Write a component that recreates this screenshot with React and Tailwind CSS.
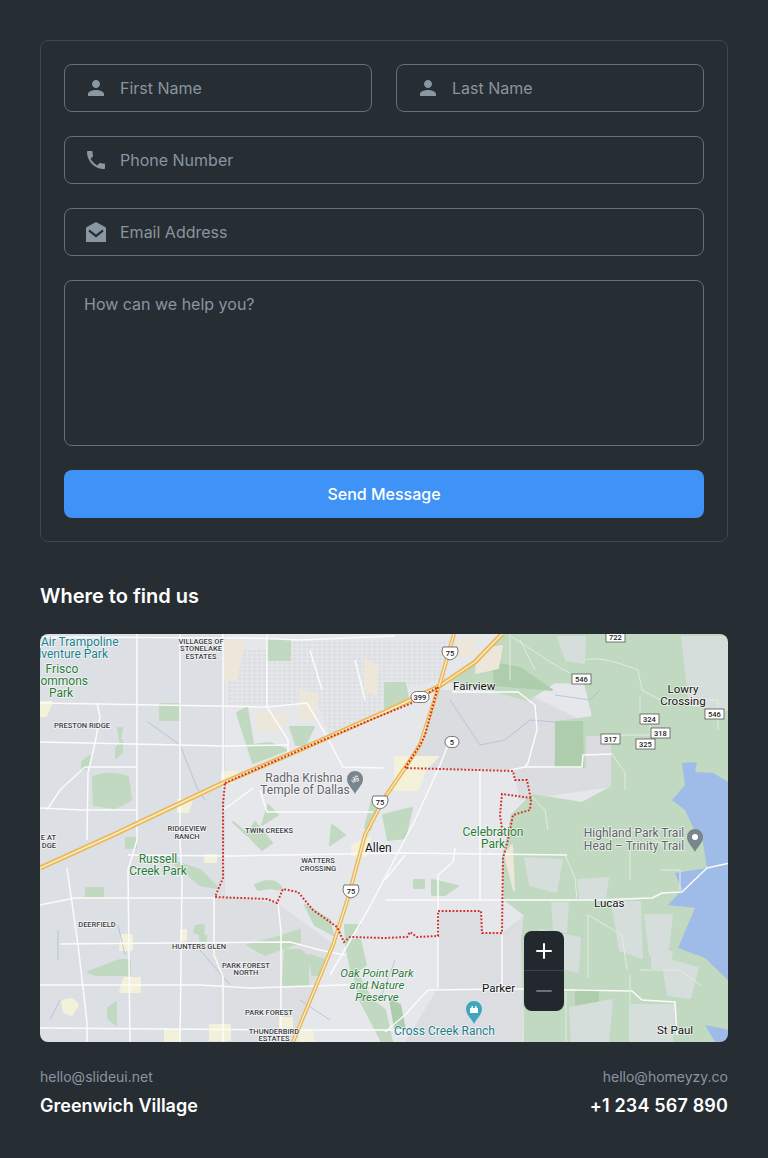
import { Plus, Minus } from 'lucide-react';

// --- map data, in page coordinates (viewBox starts at 40,634) ---
const greens = [
  'M502 634 L728 634 L728 1042 L525 1042 L522 940 L525 915 L505 900 L503 858 L512 815 L532 795 L582 803 L612 787 L612 735 L585 735 L585 767 L555 767 L558 722 L593 717 L585 683 L555 682 L528 700 L498 692 L452 682 L478 663 Z',
  'M237 713 L247 707 L253 745 L270 743 L287 750 L253 763 Z', 'M385 683 L405 683 L408 698 L385 708 Z',
  'M160 704 H180 V720 H160 Z', 'M268 640 H290 V660 H268 Z', 'M290 727 H314 L305 745 H296 Z', 'M116 748 L122 740 L122 752 L116 758 Z',
  'M93 777 Q110 770 128 777 L131 800 L115 808 L94 805 Z', 'M82 762 L90 756 L88 767 L82 770 Z', 'M118 728 L122 728 L120 740 Z',
  'M86 888 H103 V897 H86 Z', 'M200 936 H206 V942 H200 Z', 'M285 950 H300 L318 965 H308 V985 H283 Z',
  'M310 955 L325 960 L322 975 L312 975 Z', 'M345 940 H360 L366 965 L352 975 Z', 'M352 965 L372 1000 L385 1010 L392 1042 L382 1042 L360 1000 Z',
  'M88 972 L120 960 H130 V975 L95 975 Z', 'M108 1008 L116 1002 V1025 L108 1018 Z', 'M170 860 L200 885 L218 888 L200 870 Z',
  'M255 885 Q275 875 283 890 L270 888 L258 890 Z', 'M372 800 L378 806 L370 830 L365 828 Z', 'M196 926 L204 925 L203 936 L194 932 Z',
  'M383 815 L412 808 L405 838 L388 840 Z', 'M233 822 L243 830 L262 850 L272 843 L255 822 L247 835 Z', 'M268 805 L278 815 L262 825 Z',
  'M332 825 L345 835 L330 845 Z', 'M305 905 L330 920 L333 935 L315 925 Z', 'M247 945 L275 938 L300 930 L300 942 L265 955 Z',
  'M432 880 L458 886 L445 895 L432 895 Z', 'M414 880 H424 V888 H414 Z', 'M126 838 H136 V848 H126 Z', 'M346 940 L360 925 L345 925 Z',
];
const darkGreens = [
  'M556 722 H582 L583 767 H556 Z', 'M493 663 L520 668 L552 690 L495 685 Z',
  'M390 1000 L400 1005 L405 1030 L395 1028 Z', 'M576 990 H598 V1007 H576 Z',
];
const suburbs = [
  'M525 858 L562 860 L556 892 L530 885 Z', 'M578 880 L608 878 L605 898 L580 898 Z', 'M552 903 L568 903 L566 932 L554 930 Z',
  'M612 902 L640 902 L642 958 L620 950 Z', 'M645 915 L672 915 L668 950 L650 955 Z', 'M652 952 L672 952 L668 968 L652 968 Z',
  'M662 958 L698 968 L690 998 L668 995 Z', 'M540 930 L580 938 L578 972 L552 965 Z', 'M570 1008 L612 1000 L608 1042 L572 1042 Z',
  'M632 1005 L675 1005 L672 1042 L632 1042 Z', 'M682 637 L730 637 L730 710 L690 705 Z', 'M558 637 L585 637 L584 663 L566 660 Z',
];
const beige = [
  'M225 642 L245 640 L236 680 H225 Z', 'M300 690 L318 695 L314 720 H300 Z', 'M258 712 L288 715 L282 730 H258 Z',
  'M478 650 L502 646 L498 668 L476 673 Z', 'M505 855 L512 845 L514 890 Z', 'M365 660 L378 665 L376 695 L365 690 Z', 'M455 640 L475 638 L472 656 L458 655 Z',
];
const yellows = [
  'M395 757 H438 L425 770 L418 790 H395 Z', 'M178 800 H192 L188 812 H178 Z', 'M222 772 H238 L232 783 H222 Z', 'M352 845 L370 838 L366 856 L352 855 Z',
  'M122 935 H132 V950 H120 Z', 'M62 1002 Q72 995 78 1005 L72 1015 L64 1012 Z', 'M124 978 H140 V992 H120 Z',
  'M210 1025 H230 V1040 H210 Z', 'M165 1030 H180 V1042 H165 Z', 'M181 930 H186 V940 H181 Z', 'M40 702 H52 L46 716 H40 Z', 'M205 855 H216 V862 H205 Z',
  'M300 1032 L312 1030 L314 1042 H300 Z', 'M280 1018 H292 V1028 H280 Z',
];
const roads = [
  'M40 637 L250 638 L300 640 L395 636', 'M40 703 L267 707 L307 703 L327 737 L343 767 L385 768', 'M40 742 L225 746 L288 745',
  'M137 634 V840 L128 870 L130 1042', 'M180 634 V840 L182 880 L180 1042', 'M223 634 V790 M214 897 V955 L223 977 V1042',
  'M97 703 L100 717 L95 743 L88 773 L87 840 M67 868 L78 945 L87 1022 V1042', 'M85 767 H137', 'M40 808 L82 810 H137', 'M85 767 L60 790 L47 810',
  'M128 855 L230 856 L285 855 L400 853 L567 855', 'M40 905 L75 898 L215 898', 'M60 944 L290 942 L320 950 L345 955',
  'M40 985 L200 985 L250 988 L340 985 L370 985 L405 988', 'M40 1028 L300 1030 L405 1030', 'M278 903 L281 932 V1042',
  'M267 635 V707 L288 740 V757', 'M253 788 L237 800 L223 810 M260 790 L267 812 L373 812', 'M310 650 L322 690', 'M355 660 L365 700',
  'M452 692 L518 692 L535 705 L537 730 L528 763 L525 767 L582 767 L583 755 L612 754', 'M525 767 L510 770',
  'M450 740 L440 765 L415 820 L368 910 L330 975', 'M455 848 L453 862 L438 875 V988', 'M405 855 L385 880', 'M480 771 V900',
  'M385 900 L598 900 L652 898 L662 893 L682 892 L707 868 L730 863',
  'M428 990 L515 989 L632 991 L642 1000 L675 1002 L677 1035', 'M502 935 V988', 'M405 1015 L428 990', 'M385 1032 L405 1015',
];
const minorRoads = [
  'M585 660 Q600 655 638 670 L642 690 L658 699 L718 700 V730', 'M612 754 L625 773 V790', 'M532 797 L545 810 L548 830', 'M565 855 L575 878 L577 900',
  'M588 915 V978', 'M612 735 H650 V725', 'M640 697 L640 725', 'M600 830 H640 L670 850', 'M630 835 V880 M660 870 H680 V890',
  'M640 970 H680 L700 985', 'M520 640 L535 670', 'M510 634 V680', 'M512 637 L552 663 L570 673',
  'M630 975 V1042', 'M627 970 L622 935 L588 915', 'M523 1008 V1042', 'M566 992 V1042',
];
const streams = [
  'M118 925 L125 955', 'M58 930 V960', 'M148 722 L180 745 L198 790 L205 800', 'M200 950 L230 985', 'M300 1000 L330 1020',
  'M555 722 L530 720 L505 740 L480 745 L450 700', 'M600 690 L590 700 L555 695', 'M380 1000 L395 960', 'M60 1000 L50 1020',
];
const dots = 'M225 783 L300 750 L370 720 L412 703 L438 687 L425 735 L420 745 L405 768 L513 771 L515 780 L527 780 L531 800 L530 810 L513 815 L508 840 L503 858 L502 933 L482 933 L481 911 L438 911 L438 936 L417 937 L410 932 L407 937 L385 938 L350 937 L344 942 L337 927 L313 910 L298 892 L283 889 L277 903 L267 899 L215 897 L223 878 L223 803 Z M531 798 L502 794 L500 815 L503 835';
const teal = '#1a7f8e';
const parkGreen = '#2a7b37';
const labels = [
  ['Air Trampoline', 41, 646, 12, teal, 'start'], ['Adventure Park', 108, 658, 12, teal, 'end'],
  ['Frisco', 62, 673, 12, parkGreen], ['Commons', 88, 685, 12, parkGreen, 'end'], ['Park', 61, 697, 12, parkGreen],
  ['VILLAGES OF', 201, 644, 7.5, '#3c4043'], ['STONELAKE', 201, 651, 7.5, '#3c4043'], ['ESTATES', 201, 659, 7.5, '#3c4043'],
  ['PRESTON RIDGE', 82, 728, 7.5, '#3c4043'], ['Radha Krishna', 304, 782, 12, '#5f6368'], ['Temple of Dallas', 305, 794, 12, '#5f6368'],
  ['RIDGEVIEW', 187, 831, 7.5, '#3c4043'], ['RANCH', 187, 839, 7.5, '#3c4043'], ['TWIN CREEKS', 269, 833, 7.5, '#3c4043'],
  ['Fairview', 453, 690, 11.5, '#111', 'start'], ['Lowry', 683, 693, 11.5, '#111'], ['Crossing', 683, 705, 11.5, '#111'],
  ['Celebration', 493, 836, 12, parkGreen], ['Park', 493, 848, 12, parkGreen],
  ['Highland Park Trail', 634, 837, 12, '#5f6368'], ['Head – Trinity Trail', 634, 850, 12, '#5f6368'],
  ['Allen', 365, 852, 12, '#111', 'start'], ['WATTERS', 318, 863, 7.5, '#3c4043'], ['CROSSING', 318, 871, 7.5, '#3c4043'],
  ['Russell', 158, 863, 12, parkGreen], ['Creek Park', 158, 875, 12, parkGreen],
  ['E AT', 56, 840, 7.5, '#3c4043', 'end'], ['DGE', 56, 848, 7.5, '#3c4043', 'end'],
  ['DEERFIELD', 97, 927, 7.5, '#3c4043'], ['HUNTERS GLEN', 199, 949, 7.5, '#3c4043'],
  ['PARK FOREST', 246, 968, 7.5, '#3c4043'], ['NORTH', 246, 975, 7.5, '#3c4043'], ['PARK FOREST', 269, 1015, 7.5, '#3c4043'],
  ['THUNDERBIRD', 274, 1034, 7.5, '#3c4043'], ['ESTATES', 274, 1041, 7.5, '#3c4043'],
  ['Lucas', 594, 907, 11.5, '#111', 'start'], ['Parker', 482, 992, 11.5, '#111', 'start'], ['St Paul', 657, 1034, 11.5, '#111', 'start'],
  ['Cross Creek Ranch', 394, 1035, 12, teal, 'start'],
];
const italicLabels = [['Oak Point Park', 377, 977], ['and Nature', 377, 989], ['Preserve', 377, 1001]];
const stateShields = [['722', 615, 637], ['546', 581, 679], ['546', 714, 714], ['324', 649, 719], ['318', 660, 733], ['325', 645, 744], ['317', 610, 739]];
const ovalShields = [['399', 420, 697], ['5', 452, 742]];
const usShields = [[450, 653], [380, 802], [351, 891]];

function Pin({ x, y, color, children }) {
  return (
    <g transform={`translate(${x} ${y})`}>
      <path d="M0 14 C-2 9 -8 5 -8 -1 A8 8 0 1 1 8 -1 C8 5 2 9 0 14 Z" fill={color} />
      {children}
    </g>
  );
}

function Blobs({ paths, fill }) {
  return (
    <g fill={fill} stroke={fill} strokeWidth="2" strokeLinejoin="round">
      {paths.map(d => <path key={d} d={d} />)}
    </g>
  );
}

function MapDrawing() {
  return (
    <svg viewBox="40 634 688 408" className="block w-full h-full" fontFamily="Roboto, sans-serif">
      <defs>
        <pattern id="streets" width="5" height="4" patternUnits="userSpaceOnUse">
          <rect width="5" height="4" fill="#dcdee2" />
          <path d="M0 1H5M2 0V4" stroke="#eceef0" strokeWidth="0.7" />
        </pattern>
        <filter id="soft" x="0" y="0" width="100%" height="100%">
          <feGaussianBlur stdDeviation="0.45" />
        </filter>
      </defs>
      <g filter="url(#soft)">
        <rect x="40" y="634" width="688" height="408" fill="#e5e7eb" />
        <rect x="40" y="634" width="185" height="408" fill="#dcdfe3" />
        <path d="M225 897 L215 897 V1042 L295 1042 L335 945 L277 903 Z" fill="#dcdee2" />
        <path d="M438 911 H481 V933 H502 L525 915 V1042 H405 L438 988 Z" fill="#dbdde1" />
        <path d="M440 690 H520 L612 735 V787 L520 800 L513 770 L405 768 L430 720 Z" fill="#dadce0" />
        <path d="M290 640 H395 L385 712 L330 737 L318 705 L285 705 L267 707 V640 Z" fill="url(#streets)" />
        <path d="M228 650 H267 V707 H228 Z" fill="url(#streets)" />
        <path d="M395 640 H452 L445 680 L390 690 Z" fill="url(#streets)" />
        <Blobs paths={greens} fill="#c0d9c0" />
        <Blobs paths={darkGreens} fill="#aecdac" />
        <Blobs paths={suburbs} fill="#d6dedb" />
        <Blobs paths={beige} fill="#ece7d8" />
        <Blobs paths={yellows} fill="#f4f1da" />
        {/* water */}
        <path d="M682 763 L697 762 L695 772 L713 773 L730 783 V982 L705 958 L678 948 L695 908 L668 905 L682 890 L675 873 L707 868 L703 842 L693 827 L685 810 L672 800 L685 785 Z" fill="#9fbbe8" />
        <path d="M705 1025 L730 1030 V1042 H715 Z" fill="#9fbbe8" />
        <g fill="none" stroke="#a9b9d6" strokeWidth="0.7">
          {streams.map(d => <path key={d} d={d} />)}
        </g>
        <g fill="none" stroke="#fbfbfb" strokeWidth="1.5" strokeLinejoin="round">
          {roads.map(d => <path key={d} d={d} />)}
        </g>
        <g fill="none" stroke="#e3ebe3" strokeWidth="1">
          {minorRoads.map(d => <path key={d} d={d} />)}
        </g>
      </g>
      {/* freeways */}
      <g fill="none" strokeLinejoin="round">
        <path d="M40 868 L113 835 L225 782 L288 755 L385 712 L438 687 L475 662 L502 634" stroke="#e9b859" strokeWidth="5" />
        <path d="M40 868 L113 835 L225 782 L288 755 L385 712 L438 687 L475 662 L502 634" stroke="#fbeec6" strokeWidth="1.4" />
        <path d="M454 634 L440 683 L420 745 L405 768 L385 797 L365 835 L348 898 L333 945 L293 1042" stroke="#e9b859" strokeWidth="4" />
        <path d="M454 634 L440 683 L420 745 L405 768 L385 797 L365 835 L348 898 L333 945 L293 1042" stroke="#fbeec6" strokeWidth="1.2" />
      </g>
      <path d={dots} fill="none" stroke="#d22f28" strokeWidth="2" strokeDasharray="1.8 1.8" />
      {/* highway shields */}
      {stateShields.map(([t, x, y]) => (
        <g key={t + x}>
          <rect x={x - 9} y={y - 5} width="19" height="10" fill="#fff" stroke="#555" strokeWidth="0.8" />
          <text x={x + 0.5} y={y + 2.6} textAnchor="middle" fontSize="7.5" fontWeight="500" fill="#222">{t}</text>
        </g>
      ))}
      {ovalShields.map(([t, x, y]) => (
        <g key={t}>
          <rect x={x - (t.length > 1 ? 9 : 7)} y={y - 5.5} width={t.length > 1 ? 18 : 14} height="11" rx="5.5" fill="#fff" stroke="#555" strokeWidth="0.8" />
          <text x={x} y={y + 2.6} textAnchor="middle" fontSize="7.5" fontWeight="500" fill="#222">{t}</text>
        </g>
      ))}
      {usShields.map(([x, y]) => (
        <g key={x}>
          <path d={`M${x - 7} ${y - 6} H${x + 7} L${x + 8} ${y - 2} Q${x + 8} ${y + 5} ${x} ${y + 7} Q${x - 8} ${y + 5} ${x - 8} ${y - 2} Z`} fill="#fff" stroke="#555" strokeWidth="0.8" />
          <text x={x} y={y + 3} textAnchor="middle" fontSize="7.5" fontWeight="500" fill="#222">75</text>
        </g>
      ))}
      {/* labels */}
      <g stroke="#ffffff" strokeOpacity="0.7" strokeWidth="1.6" paintOrder="stroke">
        {labels.map(([t, x, y, size, color, anchor]) => (
          <text key={t + x + y} x={x} y={y} fontSize={size} fill={color} textAnchor={anchor || 'middle'} fontWeight={size < 8 ? 500 : 400}>{t}</text>
        ))}
        {italicLabels.map(([t, x, y]) => (
          <text key={t} x={x} y={y} fontSize="11.5" fontStyle="italic" fill={parkGreen} textAnchor="middle">{t}</text>
        ))}
      </g>
      {/* place pins */}
      <Pin x={355} y={780} color="#78858c">
        <text x="0" y="3" textAnchor="middle" fontSize="9" fill="#fff">ॐ</text>
      </Pin>
      <Pin x={695} y={838} color="#78858c">
        <circle cx="0" cy="-1" r="3" fill="#fff" />
      </Pin>
      <Pin x={474} y={1010} color="#3fa6bd">
        <path d="M-4 3 V-2 H-2.5 V-4 H-1 V-2 H1 V-4 H2.5 V-2 H4 V3 Z" fill="#fff" />
      </Pin>
    </svg>
  );
}

function PersonIcon() {
  return (
    <svg viewBox="0 0 24 24" className="w-6 h-6 fill-[#8a97a3] shrink-0">
      <path d="M12 12c2.21 0 4-1.79 4-4s-1.79-4-4-4-4 1.79-4 4 1.79 4 4 4zm0 2c-2.67 0-8 1.34-8 4v2h16v-2c0-2.66-5.33-4-8-4z" />
    </svg>
  );
}

function PhoneIcon() {
  return (
    <svg viewBox="0 0 24 24" className="w-6 h-6 fill-[#8a97a3] shrink-0">
      <path d="M6.62 10.79c1.44 2.83 3.76 5.14 6.59 6.59l2.2-2.2c.27-.27.67-.36 1.02-.24 1.12.37 2.33.57 3.57.57.55 0 1 .45 1 1V20c0 .55-.45 1-1 1-9.39 0-17-7.61-17-17 0-.55.45-1 1-1h3.5c.55 0 1 .45 1 1 0 1.25.2 2.45.57 3.57.11.35.03.74-.25 1.02l-2.2 2.2z" />
    </svg>
  );
}

function MailOpenIcon() {
  return (
    <svg viewBox="0 0 24 24" className="w-6 h-6 fill-[#8a97a3] shrink-0">
      <path fillRule="evenodd" d="M12 2 L21.2 7 Q22 7.5 22 8.5 V22 H2 V8.5 Q2 7.5 2.8 7 Z M5.5 9.5 L4.5 11.5 L12 17.5 L19.5 11.5 L18.5 9.5 L12 14.5 Z" />
    </svg>
  );
}

function Field({ icon, placeholder, type = 'text' }) {
  return (
    <div className="flex items-center gap-3 h-12 px-[19px] rounded-lg border border-[#667079]">
      {icon}
      <input type={type} placeholder={placeholder}
        className="w-full bg-transparent outline-none text-base text-white placeholder:text-[#8a95a0]" />
    </div>
  );
}

export default function App() {
  return (
    <div className="min-h-[1158px] bg-[#262d33] px-10 pt-10 pb-[36px] font-['Inter',sans-serif]">

      {/* Form */}
      <form className="flex flex-col gap-6 p-[23px] rounded-lg border border-[#3f474f]">
        <div className="grid grid-cols-2 gap-6">
          <Field icon={<PersonIcon />} placeholder="First Name" />
          <Field icon={<PersonIcon />} placeholder="Last Name" />
        </div>
        <Field icon={<PhoneIcon />} placeholder="Phone Number" type="tel" />
        <Field icon={<MailOpenIcon />} placeholder="Email Address" type="email" />
        <textarea placeholder="How can we help you?"
          className="block h-[166px] px-[19px] py-[11px] rounded-lg border border-[#667079] bg-transparent outline-none resize-none text-base text-white placeholder:text-[#8a95a0]" />
        <button type="button" className="h-12 rounded-lg bg-[#3f93f6] text-white text-base font-medium">
          Send Message
        </button>
      </form>

      <h2 className="mt-10 text-xl leading-7 font-semibold text-white">Where to find us</h2>

      {/* Map */}
      <div className="relative mt-6 h-[408px] rounded-lg overflow-hidden">
        <MapDrawing />
        <div className="absolute left-[484px] top-[297px] flex flex-col w-10 h-20 rounded-lg bg-[#22282e]">
          <button type="button" className="flex items-center justify-center h-10 text-white border-b border-[#3b4249]">
            <Plus size={24} />
          </button>
          <button type="button" className="flex items-center justify-center h-10 text-[#68727c]">
            <Minus size={24} />
          </button>
        </div>
      </div>

      {/* Footer */}
      <div className="flex justify-between mt-[25px]">
        <div className="flex flex-col gap-[5px]">
          <span className="text-sm leading-5 text-[#8a95a0]">hello@slideui.net</span>
          <span className="text-lg leading-7 font-semibold text-white">Greenwich Village</span>
        </div>
        <div className="flex flex-col gap-[5px] items-end">
          <span className="text-sm leading-5 text-[#8a95a0]">hello@homeyzy.co</span>
          <span className="text-lg leading-7 font-semibold text-white tracking-[0.15px]">+1 234 567 890</span>
        </div>
      </div>
    </div>
  );
}
